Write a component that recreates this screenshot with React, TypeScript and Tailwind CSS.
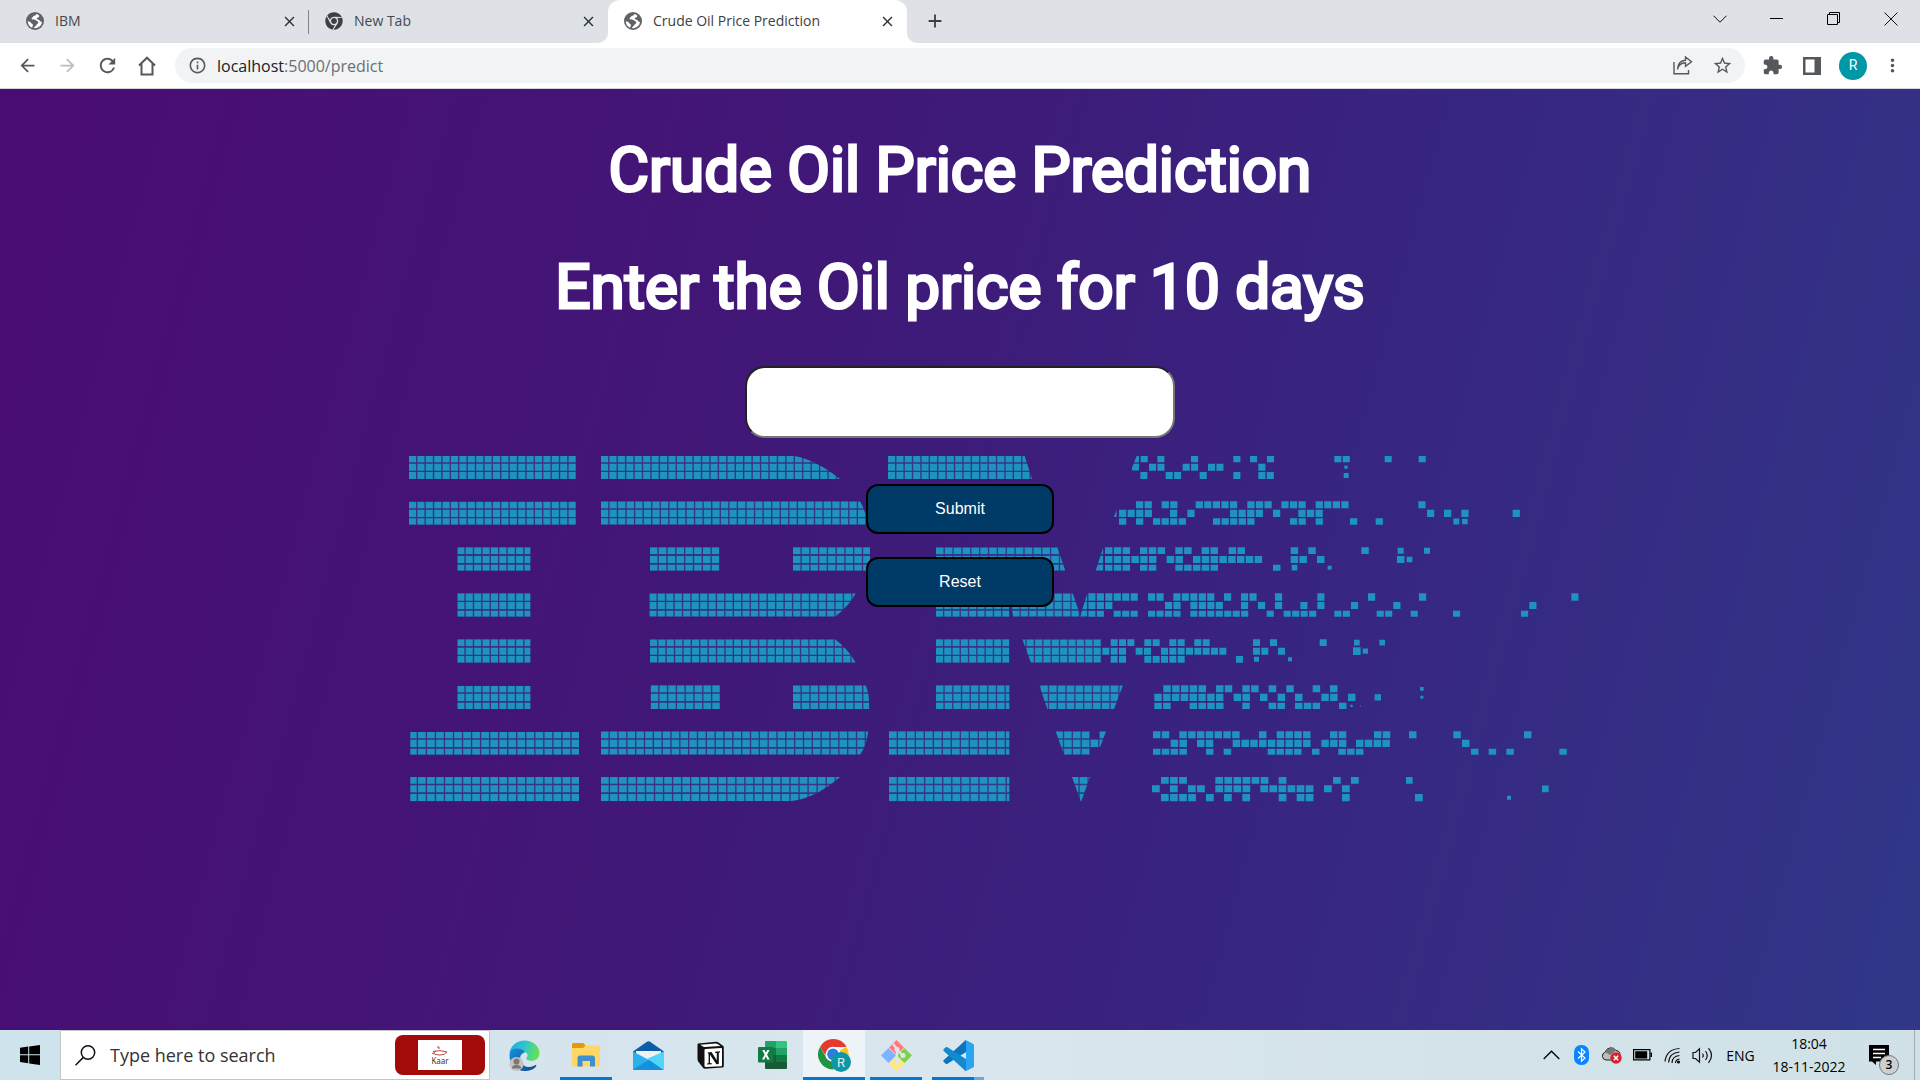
import React from "react";
import {
  MdClose,
  MdAdd,
  MdArrowBack,
  MdArrowForward,
  MdRefresh,
  MdOutlineHome,
  MdInfoOutline,
  MdStarBorder,
  MdExtension,
  MdMoreVert,
} from "react-icons/md";
import { FaChrome } from "react-icons/fa";

/* ---------- Background artwork ---------- */

type Grid = { x: number; end: number; pitch: number; d: string };
type Band = {
  rows: [number, number][];
  pitch: number;
  solids: Grid[];
  /** Runs of loose cells per line: [start, count, size?] */
  loose: [number, number, number?][][];
};

const bands: Band[] = [
  {
    rows: [[48, 67], [71, 92], [96, 117]],
    pitch: 25.2,
    solids: [
      { x: 27, end: 528, pitch: 25.2, d: "M27 48H528V117H27Z" },
      { x: 603, end: 1320, pitch: 25.3, d: "M603 48H1182Q1245 58 1320 117H603Z" },
      { x: 1464, end: 1896, pitch: 25.2, d: "M1464 48H1874L1896 117H1464Z" },
      { x: 2196, end: 2218, pitch: 25.2, d: "M2210 48H2217V92H2196V84Z" },
    ],
    loose: [
      [[122, 1], [172, 1], [273, 1], [400, 1], [450, 1], [501, 1], [703, 2], [854, 1], [956, 1]],
      [[147, 2], [248, 2], [324, 2], [475, 1], [733, 1, 10]],
      [[121, 1], [197, 2], [299, 1], [400, 1], [475, 2], [731, 1, 15]],
    ],
  },
  {
    rows: [[184, 205], [209, 231], [235, 254]],
    pitch: 25.7,
    solids: [
      { x: 27, end: 528, pitch: 25.2, d: "M27 185H528V254H27Z" },
      { x: 603, end: 1420, pitch: 25.7, d: "M603 184H1380Q1398 215 1404 254H603Z" },
      { x: 2142, end: 2152, pitch: 25.7, d: "M2150 209V231H2142Z" },
    ],
    loose: [
      [[108, 2], [185, 2], [287, 5], [442, 3], [544, 3], [647, 4], [955, 1]],
      [[57, 4], [210, 1], [262, 1], [390, 4], [519, 1], [595, 3], [981, 1], [1032, 1], [1084, 1], [1238, 1]],
      [[57, 1], [108, 1], [159, 4], [339, 5], [570, 2], [647, 1], [750, 1], [827, 1], [1060, 1, 18], [1086, 1, 17]],
    ],
  },
  {
    rows: [[322, 342], [348, 369], [374, 392]],
    pitch: 26.4,
    solids: [
      { x: 172, end: 391, pitch: 25.2, d: "M172 322H391V392H172Z" },
      { x: 750, end: 958, pitch: 26.5, d: "M750 322H958V392H750Z" },
      { x: 1179, end: 1412, pitch: 26.3, d: "M1179 322H1410V392H1179Z" },
      { x: 1608, end: 1996, pitch: 26.6, d: "M1608 322H1972L1996 392H1608Z" },
      { x: 2088, end: 2110, pitch: 26.4, d: "M2110 322V392H2087L2108 328Z" },
    ],
    loose: [
      [[15, 3], [120, 3], [226, 2], [305, 2], [386, 2], [572, 1], [625, 1], [784, 1], [893, 1, 18], [972, 1, 18]],
      [[15, 6], [200, 2], [279, 8], [572, 2], [651, 1], [891, 1], [920, 1, 17]],
      [[15, 3], [120, 2], [226, 5], [519, 1], [575, 1, 17], [683, 1, 12]],
    ],
  },
  {
    rows: [[460, 482], [486, 507], [512, 530]],
    pitch: 25.4,
    solids: [
      { x: 172, end: 391, pitch: 25.2, d: "M172 460H391V530H172Z" },
      { x: 748, end: 1367, pitch: 25.4, d: "M748 460H1367Q1348 498 1305 530H748Z" },
      { x: 1608, end: 1828, pitch: 24.9, d: "M1608 460H1828V530H1608Z" },
      { x: 1837, end: 2050, pitch: 25.4, d: "M1832 500V460H2018L2042 530H1840Z" },
      { x: 2042, end: 2062, pitch: 25.4, d: "M2062 460V530H2040Z" },
    ],
    loose: [
      [[-35, 6], [144, 2], [220, 5], [372, 1], [423, 2], [525, 1], [652, 1], [804, 1], [957, 1], [1414, 1]],
      [[-35, 3], [195, 2], [271, 4], [423, 1], [474, 1], [525, 1], [601, 1], [652, 1], [753, 1], [880, 1], [1288, 1]],
      [[-35, 2], [41, 3], [144, 4], [271, 7], [500, 1], [551, 4], [703, 2], [830, 2], [932, 1], [1059, 1], [1263, 1]],
    ],
  },
  {
    rows: [[598, 618], [623, 644], [648, 668]],
    pitch: 25,
    solids: [
      { x: 172, end: 391, pitch: 25.2, d: "M172 598H391V668H172Z" },
      { x: 750, end: 1367, pitch: 25.2, d: "M750 598H1305Q1342 625 1367 668H750Z" },
      { x: 1608, end: 1828, pitch: 24.9, d: "M1608 598H1828V668H1608Z" },
      { x: 1855, end: 2104, pitch: 25.1, d: "M1867 598H2104V668H1893Z" },
    ],
    loose: [
      [[32, 3], [133, 2], [208, 2], [283, 2], [459, 1], [510, 1], [659, 1], [762, 1, 17], [838, 1, 17]],
      [[7, 3], [107, 2], [183, 8], [459, 2], [534, 1], [759, 1, 23], [788, 1, 16]],
      [[32, 2], [133, 5], [408, 1], [462, 1, 15], [564, 1, 12]],
    ],
  },
  {
    rows: [[736, 757], [761, 783], [788, 807]],
    pitch: 26.4,
    solids: [
      { x: 172, end: 391, pitch: 25.2, d: "M172 738H391V807H172Z" },
      { x: 752, end: 960, pitch: 26.4, d: "M752 736H960V807H752Z" },
      { x: 1179, end: 1410, pitch: 26.4, d: "M1179 736H1397Q1408 760 1408 807H1179Z" },
      { x: 1608, end: 1828, pitch: 26.2, d: "M1608 736H1828V807H1608Z" },
      { x: 1921, end: 2170, pitch: 26.4, d: "M1918 736H2169L2142 807H1942Z" },
    ],
    loose: [
      [[190, 5], [348, 2], [427, 2], [506, 1], [559, 1], [638, 1], [690, 1], [960, 1, 11]],
      [[163, 8], [401, 2], [480, 1], [533, 1], [585, 1], [664, 2], [744, 1], [824, 1, 19], [961, 1, 9]],
      [[163, 2], [269, 4], [427, 1], [506, 2], [585, 3], [717, 1], [751, 1, 7], [780, 1, 3]],
    ],
  },
  {
    rows: [[874, 895], [899, 921], [926, 944]],
    pitch: 26.4,
    solids: [
      { x: 27, end: 537, pitch: 27.1, d: "M31 876H537V944H31Z" },
      { x: 603, end: 1405, pitch: 26.5, d: "M603 874H1405Q1398 922 1380 944H603Z" },
      { x: 1467, end: 1828, pitch: 27, d: "M1467 874H1828V944H1467Z" },
      { x: 1966, end: 2120, pitch: 26.5, d: "M1967 874H2070V897H2098V874H2118L2100 922H2070V944H1992Z" },
    ],
    loose: [
      [[159, 2], [238, 7], [477, 1], [530, 4], [690, 2], [822, 2], [927, 1], [1060, 1], [1272, 1]],
      [[212, 2], [291, 2], [398, 5], [530, 4], [664, 3], [768, 4], [1086, 1]],
      [[159, 4], [318, 1], [371, 1], [503, 4], [636, 1], [715, 3], [1113, 1], [1166, 1], [1219, 1], [1378, 1]],
    ],
  },
  {
    rows: [[1011, 1031], [1036, 1057], [1062, 1084]],
    pitch: 27.2,
    solids: [
      { x: 27, end: 537, pitch: 27.1, d: "M31 1011H537V1084H31Z" },
      { x: 603, end: 1320, pitch: 27.1, d: "M603 1011H1320Q1245 1076 1170 1084H603Z" },
      { x: 1467, end: 1828, pitch: 27.2, d: "M1467 1011H1828V1084H1467Z" },
      { x: 2012, end: 2072, pitch: 27.2, d: "M2016 1011H2070L2043 1086Z" },
    ],
    loose: [
      [[183, 3], [346, 6], [536, 1], [699, 1], [753, 1], [918, 1, 20]],
      [[156, 1], [210, 1], [264, 2], [346, 4], [481, 6], [672, 1], [726, 1], [1326, 1, 20]],
      [[183, 4], [318, 1], [372, 1], [427, 1], [536, 1], [590, 2], [726, 1], [945, 1], [1221, 1, 12]],
    ],
  },
];

const LOOSE_ORIGIN = 2100;

function cellsOf(grid: Grid, rows: [number, number][]) {
  const out: string[] = [];
  for (let x = grid.x; x < grid.end; x += grid.pitch) {
    for (const [top, bottom] of rows) {
      out.push(`M${x.toFixed(1)} ${top}h${(grid.pitch - 4).toFixed(1)}V${bottom}h-${(grid.pitch - 4).toFixed(1)}z`);
    }
  }
  return out.join("");
}

function looseOf(band: Band) {
  const out: string[] = [];
  band.loose.forEach((runs, line) => {
    const [top, bottom] = band.rows[line];
    const mid = (top + bottom) / 2;
    for (const [start, count, size] of runs) {
      for (let i = 0; i < count; i++) {
        const x = LOOSE_ORIGIN + start + i * band.pitch;
        const w = size ?? band.pitch - 4;
        const h = size ?? bottom - top;
        out.push(`M${x.toFixed(1)} ${mid - h / 2}h${w.toFixed(1)}v${h}h-${w.toFixed(1)}z`);
      }
    }
  });
  return out.join("");
}

function Artwork() {
  return (
    <svg
      viewBox="0 0 3600 1110"
      className="pointer-events-none absolute top-[351px] left-1/2 w-[1200px] -translate-x-[560px]"
      fill="#1f93bf"
      aria-hidden="true"
    >
      {bands.map((band, b) => (
        <g key={b}>
          {band.solids.map((s, i) => (
            <g key={i}>
              <clipPath id={`band-${b}-${i}`}>
                <path d={s.d} />
              </clipPath>
              <path d={s.d} fillOpacity=".22" />
              <path d={cellsOf(s, band.rows)} clipPath={`url(#band-${b}-${i})`} />
            </g>
          ))}
          <path d={looseOf(band)} />
        </g>
      ))}
    </svg>
  );
}

/* ---------- Browser chrome ---------- */

const GlobeIcon = () => (
  <svg width="18" height="18" viewBox="0 0 18 18" aria-hidden="true">
    <circle cx="9" cy="9" r="9" fill="#5f6368" />
    <path
      d="M10.200 1.900c-.2 1.300-1 1.700-2.200 1.900-1 .2-.7 1.400-1.600 1.600-1 .3-1 1.300-.4 1.900.5.5 1.700.3 2.800.4 1.400.1 1.500 1.300 2.600 1.500 1.300.2 1.200 2 .1 2.500-1.200.5-1 1.800-2 2.200-.9.400-1.300 1.300-1.700 2.200A7.200 7.200 0 0 0 16.100 10c-1.200.2-1.700-.6-2.400-1.400-.7-.9-2-.8-2.700-1.600-.6-.8.2-1.500 1-1.600 1.100-.2 1.300-1.200 1.200-2a7.200 7.200 0 0 0-3-1.500z"
      fill="#fff"
    />
    <path d="M1.800 9.200c1.300.2 2.600.5 3.100 1.500.4.900 1.400 1 1.900 1.700.4.800-.2 1.400-.4 2.300l-.2 1A7.200 7.200 0 0 1 1.800 9.200z" fill="#fff" />
  </svg>
);

function Tab({ title, icon, active, divider }: { title: string; icon: React.ReactNode; active?: boolean; divider?: boolean }) {
  return (
    <div
      className={
        active
          ? "relative flex h-full w-[299px] items-center rounded-t-xl bg-white pr-[11px] pb-px pl-4 text-[#3c4043]"
          : "relative flex h-full w-[299px] items-center pr-[11px] pb-px pl-4 text-[#45494d]"
      }
    >
      {active && (
        <>
          <svg viewBox="0 0 10 10" className="absolute bottom-0 -left-[10px] size-[10px]" fill="#fff" aria-hidden="true">
            <path d="M10 0v10H0A10 10 0 0 0 10 0z" />
          </svg>
          <svg viewBox="0 0 10 10" className="absolute -right-[10px] bottom-0 size-[10px]" fill="#fff" aria-hidden="true">
            <path d="M0 0v10h10A10 10 0 0 1 0 0z" />
          </svg>
        </>
      )}
      {icon}
      <span className="ml-[11px] flex-1 truncate pb-px text-[14px]">{title}</span>
      <button type="button" aria-label={`Close ${title}`} className="text-[#2f3336]">
        <MdClose size={17} />
      </button>
      {divider && <span className="absolute top-[10px] right-0 h-6 w-px bg-[#808489]" />}
    </div>
  );
}

function Chrome() {
  return (
    <header className="border-b border-[#d5d5dc]">
      <div className="flex h-[43px] items-stretch bg-[#dee1e6] pl-[10px]">
        <Tab title="IBM" icon={<GlobeIcon />} divider />
        <Tab title="New Tab" icon={<FaChrome size={18} color="#3c4043" />} />
        <Tab title="Crude Oil Price Prediction" icon={<GlobeIcon />} active />
        <button type="button" aria-label="New tab" className="ml-[17px] pb-px text-[#3c4043]">
          <MdAdd size={22} />
        </button>
        <div className="mr-px ml-auto flex text-[#111]">
          <button type="button" aria-label="Search tabs" className="flex w-[57px] items-center justify-center pb-[6px]">
            <svg width="14" height="8" viewBox="0 0 14 8" fill="none" stroke="currentColor"><path d="m.5 .7 6.5 6.5L13.500 .7" /></svg>
          </button>
          <button type="button" aria-label="Minimize" className="flex w-[57px] items-center justify-center pb-[6px]">
            <svg width="13" height="2" viewBox="0 0 13 2"><path d="M0 0h13v1H0z" fill="#000" /></svg>
          </button>
          <button type="button" aria-label="Restore" className="flex w-[57px] items-center justify-center pb-[6px]">
            <svg width="14" height="14" viewBox="0 0 14 14" fill="none" stroke="#000"><path d="M.5 2.500h10v10H.5zM2.500 2.500v-2h10v10h-2" /></svg>
          </button>
          <button type="button" aria-label="Close window" className="flex w-[57px] items-center justify-center pb-[6px]">
            <svg width="14" height="14" viewBox="0 0 14 14" stroke="currentColor"><path d="m.5 .5 13 13M13.500 .5l-13 13" /></svg>
          </button>
        </div>
      </div>
      <div className="flex h-[45px] items-center bg-white pr-[17px] pl-[17px] text-[#55595e]">
        <button type="button" aria-label="Back"><MdArrowBack size={21} /></button>
        <button type="button" aria-label="Forward" className="ml-[19px] text-[#bbbdbf]"><MdArrowForward size={21} /></button>
        <button type="button" aria-label="Reload" className="ml-[18px]"><MdRefresh size={23} /></button>
        <button type="button" aria-label="Home" className="ml-[17px]">
          <svg width="22" height="22" viewBox="0 0 22 22" fill="none" stroke="currentColor" strokeWidth="2">
            <path d="M3 10.500 11 2.700l8 7.800M5.500 8.500V19.500h11V8.500" />
          </svg>
        </button>
        <div className="relative ml-[17px] flex h-[35px] flex-1 items-center rounded-full bg-[#f1f3f4] pr-3 pl-[13px]">
          <MdInfoOutline size={19} />
          <a href="#predict" aria-label="Address" className="ml-[10px] flex-1 text-[16px] text-[#6b6f74]">
            <span className="text-[#202124]">localhost</span>:5000/predict
          </a>
          <button type="button" aria-label="Share">
            <svg width="20" height="19" viewBox="0 0 20 19" fill="none" stroke="currentColor" strokeWidth="1.4">
              <path d="M1 6v11.800h14.500V14M4.500 13.500c.8-4.500 3.500-6.600 8-6.800v3.600L18.500 5.700 12.500 1v3.200C7.500 4.500 4.800 7.500 4.500 13.500z" />
            </svg>
          </button>
          <button type="button" aria-label="Bookmark" className="ml-[19px]"><MdStarBorder size={21} /></button>
        </div>
        <button type="button" aria-label="Extensions" className="ml-[17px]"><MdExtension size={21} /></button>
        <button type="button" aria-label="Side panel" className="ml-[20px]">
          <svg width="18" height="18" viewBox="0 0 18 18" fill="currentColor"><path fillRule="evenodd" d="M0 0h18v18H0zM2.500 2.500v13h9v-13z" /></svg>
        </button>
        <button type="button" aria-label="Profile" className="ml-[18px] flex size-7 items-center justify-center rounded-full bg-[#0097a7] font-['Roboto',sans-serif] text-[14px] text-white">
          R
        </button>
        <button type="button" aria-label="Menu" className="ml-[15px]"><MdMoreVert size={21} /></button>
      </div>
    </header>
  );
}

/* ---------- Taskbar ---------- */

const EdgeIcon = () => (
  <svg width="31" height="31" viewBox="0 0 31 31" aria-hidden="true">
    <defs>
      <linearGradient id="edge-top" x1="0" y1=".3" x2="1" y2=".5"><stop stopColor="#2aa9e6" /><stop offset=".5" stopColor="#32c6c9" /><stop offset="1" stopColor="#6be24d" /></linearGradient>
      <linearGradient id="edge-low" x1="0" y1="0" x2="1" y2="1"><stop stopColor="#1490df" /><stop offset="1" stopColor="#114a8b" /></linearGradient>
    </defs>
    <path d="M.5 13C1.500 5.500 8 .5 15.500 .5 24 .5 30.500 6.500 30.500 13c0 5-3.500 7.800-8 7.800-3.500 0-5.800-1.200-5-2.800 1.200-1.500 1.500-3 .5-4.500C16 10.500 4.500 8 .5 13z" fill="url(#edge-top)" />
    <path d="M.5 15c0-6 6.500-7.500 11-6 3 1 4.500 2.500 4.500 3.500-4 .5-5.500 4-4.500 8 1.300 5 7 8.500 13 5.500 2.500-1.500 3.500-1 2.500.5C24 30 20 31 15.500 31 7 31 .5 24 .5 15z" fill="url(#edge-low)" />
    <circle cx="7.500" cy="24" r="7" fill="#c4c3c1" />
    <circle cx="7.500" cy="21.500" r="3" fill="#7b7876" />
    <path d="M2.800 28.500c0-5 9.400-5 9.400 0z" fill="#7b7876" />
  </svg>
);

const FilesIcon = () => (
  <svg width="28" height="25" viewBox="0 0 28 25" aria-hidden="true">
    <path d="M0 1.500C0 .7.500 0 1.500 0h10L14 3v3H0z" fill="#e09b06" />
    <path d="M0 5h11l2.500-2.500h13c.8 0 1.500.5 1.500 1.500v18c0 1-.5 1.500-1.500 1.500h-25C.5 23.500 0 23 0 22z" fill="#ffd767" />
    <path d="M5.500 23.500V15c0-1.500.8-2.500 2.500-2.500h12.500c1.500 0 2.500 1 2.500 2.500v8.500h-5V18h-7.500v5.500z" fill="#3d8fd1" />
  </svg>
);

const MailIcon = () => (
  <svg width="31" height="29" viewBox="0 0 31 29" aria-hidden="true">
    <path d="M0 10.500 14 .8q1.500-1 3 0L31 10.500l-4 5H4z" fill="#0b5cab" />
    <path d="M3 10h25v6L15.500 22 3 14z" fill="#f1f1f1" />
    <path d="M0 10.500 16 19l15-8.500V28q0 1-1 1H1q-1 0-1-1z" fill="#28b1ec" />
    <path d="M31 10.500V28q0 1-1 1L14 17.800z" fill="#50d4fb" />
    <path d="M0 28.500 16 19l14.500 10H1z" fill="#1590dd" />
  </svg>
);

const NotionIcon = () => (
  <svg width="27" height="28" viewBox="0 0 27 28" aria-hidden="true">
    <path d="M1 2.500 19 .8q1.500 0 2.500.7l4.500 3.300q.8.600.8 1.700V25q0 1.500-1.500 1.600L8 27.700q-1.300 0-2-.9L1.500 21Q.5 19.500.5 18V4Q.5 2.800 1 2.500z" fill="#111" />
    <path d="m3.300 3.800 15.500-1.300q1 0 1.700.5l3 2-15.500 1q-1.200 0-2-.6zM7.500 9q0-1 1-1.100l15.500-1q1 0 1 1v16.300q0 1-1 1.100L8.700 26q-1.200 0-1.200-1.200z" fill="#fff" />
    <path d="M10.500 11.500 14.500 11l5.300 8.300V12l-1.800-.3v-1l5-.4v1l-1.200.5V23l-2.400.2-6.400-9.500v8.200l2 .5v.9l-5 .3v-.9l1.600-.6v-9z" fill="#111" />
  </svg>
);

const ExcelIcon = () => (
  <svg width="29" height="28" viewBox="0 0 29 28" aria-hidden="true">
    <path d="M8 0h10.500v14H7V1q0-1 1-1z" fill="#21a366" />
    <path d="M18 0h10q1 0 1 1v6H18z" fill="#33c481" />
    <path d="M18 7h11v7H18z" fill="#21a366" />
    <path d="M7 7h11v7H7zM18 14h11v7H18z" fill="#107c41" />
    <path d="M7 14h11v7h11v6q0 1-1 1H8q-1 0-1-1z" fill="#185c37" />
    <rect y="6" width="15.500" height="15.500" rx="1.200" fill="#107c41" />
    <path d="m4.300 9 2.300 0 1.300 2.800L9.300 9h2.200l-2.400 4.700 2.500 4.800H9.300l-1.500-3-1.500 3H4l2.600-4.800z" fill="#fff" />
  </svg>
);

const ChromeIcon = () => (
  <svg width="33" height="33" viewBox="0 0 33 33" aria-hidden="true">
    <path d="M15.500 15 28.500 8A15 15 0 0 1 15 30.500l6.500-11z" fill="#fcc21b" />
    <path d="M2.200 7.800A15 15 0 0 0 15 30.500l6-10.500H9z" fill="#229342" />
    <path d="M15 8h13.500a15 15 0 0 0-26.400-.2L8.500 18z" fill="#e33b2e" />
    <circle cx="15" cy="15.300" r="7.500" fill="#fff" />
    <circle cx="15" cy="15.300" r="5.800" fill="#2f7de1" />
    <circle cx="23" cy="23" r="10" fill="#0d97a6" />
    <text x="23" y="28" textAnchor="middle" fontSize="13" fontFamily="Roboto, sans-serif" fill="#d9f2f4">R</text>
  </svg>
);

const GitIcon = () => (
  <svg width="31" height="31" viewBox="0 0 31 31" aria-hidden="true">
    <path d="M15.500 0 23 7.500l-7.500 7.500L8 7.500z" fill="#ff7b7b" />
    <path d="M31 15.500 23.500 8 16 15.500l7.500 7.500z" fill="#7fd04f" />
    <path d="M0 15.500 7.500 8l7.500 7.500L7.500 23z" fill="#80b3ff" />
    <path d="M15.500 31 8 23.500l7.500-7.500 7.500 7.500z" fill="#ffe680" />
    <path d="m12 4 4 5v13M16 10l6 5.500" stroke="#dbe7ee" strokeWidth="2.200" fill="none" />
    <circle cx="16" cy="9.500" r="2.500" fill="#dbe7ee" />
    <circle cx="22" cy="15.500" r="2.500" fill="#dbe7ee" />
    <circle cx="16" cy="22" r="2.500" fill="#dbe7ee" />
  </svg>
);

const CodeIcon = () => (
  <svg width="31" height="31" viewBox="0 0 31 31" aria-hidden="true">
    <path d="m22.500 .3 7 3.400V8L4.500 23.700q-1 .7-1.800 0L.8 22q-1-1 0-2z" fill="#0b76bd" />
    <path d="M29.500 27.500 22.500 31 .8 11q-1-1 0-2l1.900-1.700q.8-.7 1.800 0l25 16z" fill="#1389d0" />
    <path d="M22.500 31q-1-.1-1.500-.9c1 .6 2 0 2-1.100V2c0-1.100-1-1.700-2-1.100Q21.500 .2 22.500 .3L30 3.700q1 .5 1 1.600V26q0 1.100-1 1.600z" fill="#29a5f2" />
  </svg>
);

const apps: { name: string; icon: React.ReactNode; state: "idle" | "open" | "active" | "stacked" }[] = [
  { name: "Edge", icon: <EdgeIcon />, state: "idle" },
  { name: "File Explorer", icon: <FilesIcon />, state: "open" },
  { name: "Mail", icon: <MailIcon />, state: "idle" },
  { name: "Notion", icon: <NotionIcon />, state: "idle" },
  { name: "Excel", icon: <ExcelIcon />, state: "idle" },
  { name: "Chrome", icon: <ChromeIcon />, state: "active" },
  { name: "Git", icon: <GitIcon />, state: "open" },
  { name: "Code", icon: <CodeIcon />, state: "stacked" },
];

function Taskbar() {
  return (
    <footer className="flex h-[50px] items-stretch bg-linear-to-r from-[#cfe3ed] via-[#dae6ed] to-[#cfe1e7] text-black">
      <button type="button" aria-label="Start" className="flex w-[60px] items-center justify-center">
        <svg width="20" height="20" viewBox="0 0 20 20"><path d="M0 2.800 8.200 1.600v7.700H0zM9.200 1.500 20 0v9.300H9.200zM0 10.300h8.200v7.900L0 17.100zM9.200 10.300H20V20L9.200 18.400z" /></svg>
      </button>
      <label className="flex w-[430px] items-center border border-[#c3c6c8] bg-white pr-1 pl-[14px]">
        <svg width="21" height="21" viewBox="0 0 21 21" fill="none" stroke="#111" strokeWidth="1.500"><circle cx="13" cy="7.500" r="6.700" /><path d="M8.300 12.400.5 20.300" /></svg>
        <input
          type="text"
          aria-label="Search"
          placeholder="Type here to search"
          className="ml-[14px] w-0 flex-1 bg-transparent text-[18px] outline-none placeholder:text-[#333]"
        />
        <span className="flex h-10 w-[90px] items-center justify-center rounded-lg bg-[#a30a0a]">
          <span className="flex h-[30px] w-11 flex-col items-center justify-center bg-white">
            <svg width="18" height="10" viewBox="0 0 18 10" fill="none" stroke="#b5473f"><path d="M2 5.500Q9 3.500 16 6 14 9 9 9T3 7.500 5 5M6 1q3-1 2 2M1 7l2 1" /></svg>
            <span className="font-['Noto_Sans',sans-serif] text-[8px] leading-[9px] text-[#333]">Kaar</span>
          </span>
        </span>
      </label>
      <nav className="ml-[3px] flex" aria-label="Applications">
        {apps.map((app) => (
          <button
            key={app.name}
            type="button"
            aria-label={app.name}
            className={
              app.state === "active"
                ? "relative flex w-[62px] items-center justify-center bg-[#eef3f7]"
                : "relative flex w-[62px] items-center justify-center"
            }
          >
            {app.icon}
            {app.state === "open" && <span className="absolute inset-x-[5px] bottom-0 h-[3px] bg-[#0078d7]" />}
            {app.state === "active" && <span className="absolute inset-x-0 bottom-0 h-[3px] bg-[#0078d7]" />}
            {app.state === "stacked" && (
              <span className="absolute inset-x-[5px] bottom-0 h-[3px] border-r-[10px] border-[#64abe6] bg-[#0078d7]" />
            )}
          </button>
        ))}
      </nav>
      <div className="ml-auto flex items-center">
        <button type="button" aria-label="Show hidden icons" className="mr-[14px]">
          <svg width="17" height="10" viewBox="0 0 17 10" fill="none" stroke="#000" strokeWidth="1.300"><path d="m.7 9 7.800-7.800L16.300 9" /></svg>
        </button>
        <svg className="mr-[12px]" width="15" height="20" viewBox="0 0 15 20" aria-label="Bluetooth">
          <rect width="15" height="20" rx="7" fill="#0a84ff" />
          <path d="m4 6.500 7 6.500-3.500 3.200V3.800L11 7l-7 6.500" fill="none" stroke="#fff" strokeWidth="1.200" />
        </svg>
        <svg className="mr-[11px]" width="21" height="18" viewBox="0 0 21 18" aria-label="OneDrive">
          <path d="M5 14a4 4 0 0 1-.8-7.800A6 6 0 0 1 15 4.500 4 4 0 0 1 17 12l-3 2z" fill="#bdbdbd" stroke="#222" />
          <path d="M4.500 6.300A6 6 0 0 1 15 4.500L9 9z" fill="#777" />
          <circle cx="15" cy="12" r="5.700" fill="#d9202e" />
          <path d="m12.800 9.800 4.400 4.400M17.200 9.800l-4.400 4.400" stroke="#fff" strokeWidth="1.500" />
        </svg>
        <svg className="mr-[12px]" width="19" height="12" viewBox="0 0 19 12" aria-label="Battery">
          <path d="M.6.6h16.300v10.300H.6z" fill="none" stroke="#000" strokeWidth="1.200" />
          <path d="M2.200 2.200h12v7.200h-12zM17.500 3.500H19v4.500h-1.500z" />
        </svg>
        <svg className="mr-[11px]" width="17" height="17" viewBox="0 0 17 17" fill="none" stroke="#111" strokeWidth="1.200" aria-label="Wi-Fi">
          <path d="M1 14.500C2 6 7 2 15.500 1.500M4.500 15.500C5 9 9 5.500 15.500 5M8 16c0-4.500 3-7 7.500-7.500M11.500 16c0-2 1.500-3.500 4-4" />
          <circle cx="14.500" cy="15" r="1" fill="#111" />
        </svg>
        <svg width="21" height="17" viewBox="0 0 21 17" fill="none" stroke="#111" strokeWidth="1.200" aria-label="Volume">
          <path d="M1 5.500h2.500L7.500 1.800v13.400L3.500 11.500H1zM10.500 6.500q1.500 2 0 4M13.500 4q3.500 4.500 0 9M16.500 1.200q6 7.300 0 14.600" />
        </svg>
        <span className="w-[55px] text-center text-[14px]">ENG</span>
        <div className="flex w-[82px] flex-col text-center text-[14px] leading-[23px] whitespace-nowrap">
          <span>18:04</span>
          <span>18-11-2022</span>
        </div>
        <button type="button" aria-label="Notifications" className="relative mr-[15px] ml-[19px] h-[30px] w-[30px]">
          <svg width="20" height="20" viewBox="0 0 20 20"><path d="M0 0h20v16.500H7V20l-4-3.500H0z" /><path d="M4 4.500h12M4 8.500h12M4 12.500h8" stroke="#fff" strokeWidth="1.300" /></svg>
          <span className="absolute right-0 -bottom-[5px] flex size-[20px] items-center justify-center rounded-full border border-[#777] bg-[#ccd0d2] text-[12px] leading-none font-semibold">
            3
          </span>
        </button>
        <span className="mr-[5px] h-full w-px bg-[#a2acb2]" />
      </div>
    </footer>
  );
}

/* ---------- Page ---------- */

export default function App() {
  return (
    <div className="flex min-h-screen flex-col font-['Open_Sans','Noto_Sans',sans-serif]">
      <Chrome />
      <main className="relative flex flex-1 flex-col items-center overflow-hidden bg-[linear-gradient(105deg,#4a0c73_0%,#401877_40%,#38247f_65%,#313788_100%)] pt-[43px]">
        <Artwork />
        <form className="relative flex flex-col items-center" onSubmit={(e) => e.preventDefault()}>
          <h1 className="font-['Roboto',sans-serif] text-[62px] leading-[75px] font-normal text-white [-webkit-text-stroke:3px_white]">
            Crude Oil Price Prediction
          </h1>
          <h1 className="mt-[42px] font-['Roboto',sans-serif] text-[62px] leading-[75px] font-normal text-white [-webkit-text-stroke:3px_white]">
            <label htmlFor="prices">Enter the Oil price for 10 days</label>
          </h1>
          <input
            id="prices"
            type="text"
            className="mt-[42px] h-[72px] w-[430px] rounded-[20px] border-2 border-t-[#222] border-r-[#767676] border-b-[#767676] border-l-[#222] bg-white px-4 text-[20px] outline-none"
          />
          <button
            type="submit"
            className="mt-[46px] h-[50px] w-[188px] rounded-xl border-2 border-black bg-[#003a66] font-['Liberation_Sans',Arial,sans-serif] text-[16px] text-white"
          >
            Submit
          </button>
          <button
            type="reset"
            className="mt-[23px] h-[50px] w-[188px] rounded-xl border-2 border-black bg-[#003a66] font-['Liberation_Sans',Arial,sans-serif] text-[16px] text-white"
          >
            Reset
          </button>
        </form>
      </main>
      <Taskbar />
    </div>
  );
}
